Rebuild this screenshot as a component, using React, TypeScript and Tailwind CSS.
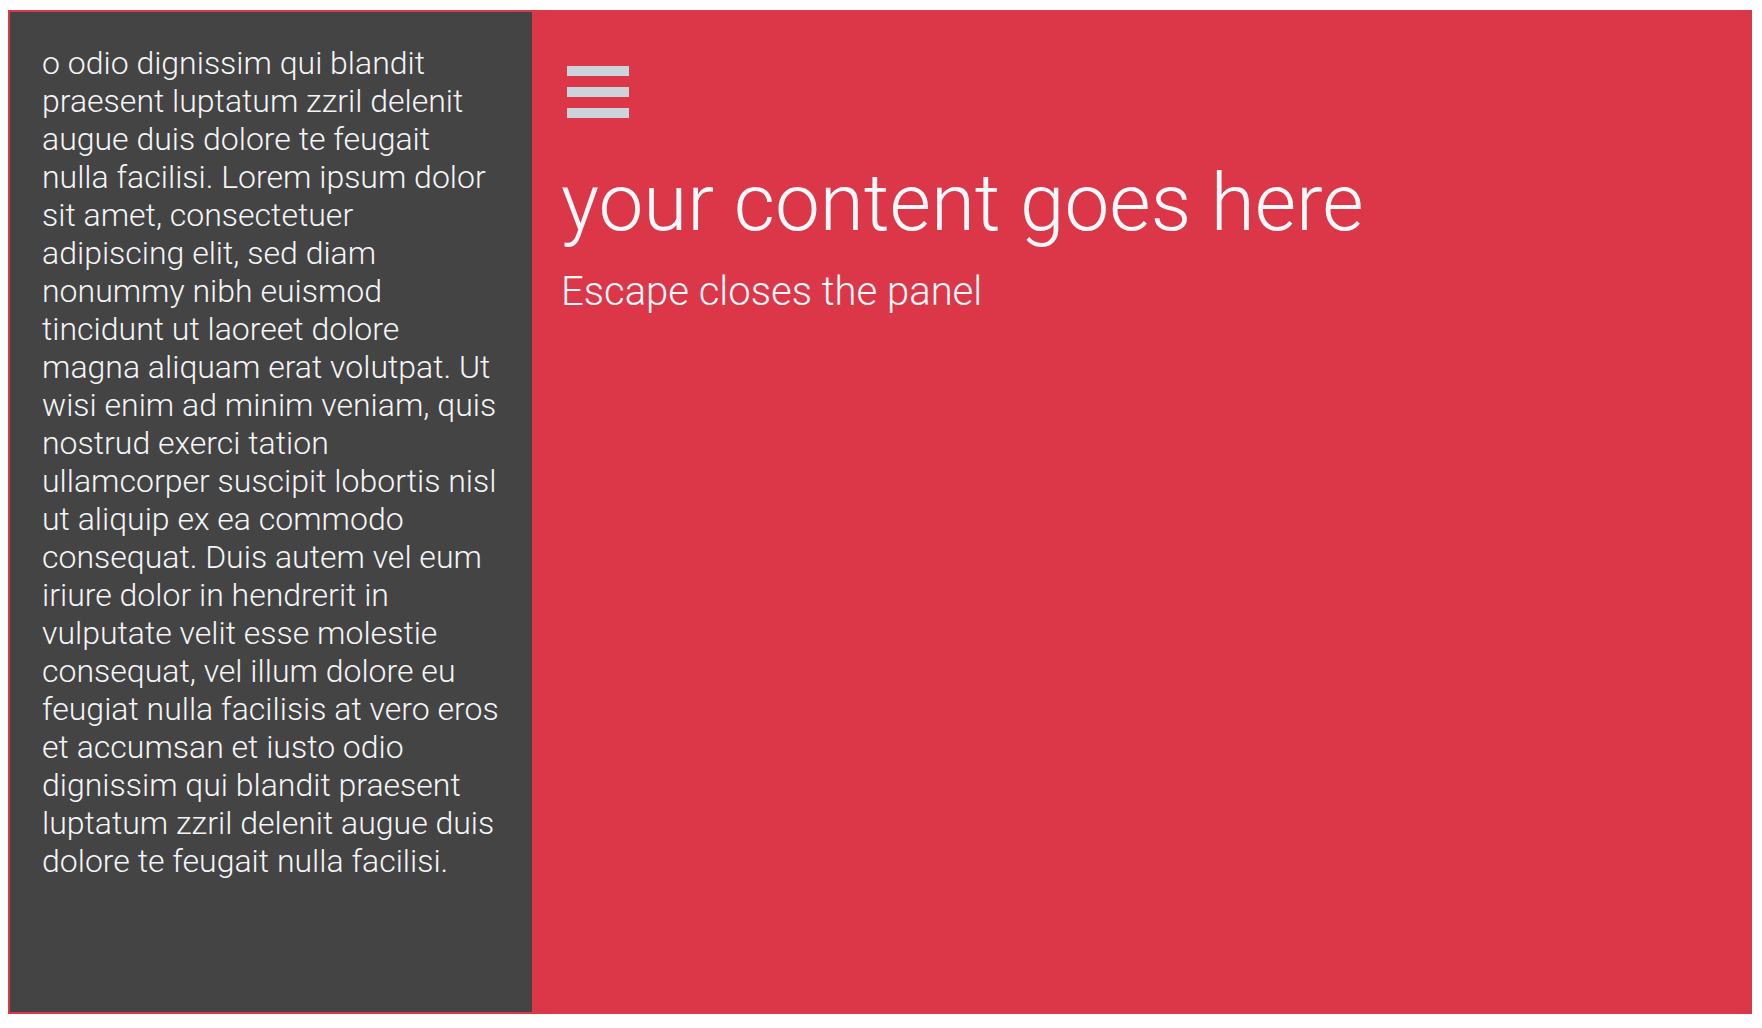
import React from "react";

const text =
  "o odio dignissim qui blandit praesent luptatum zzril delenit augue duis dolore te feugait nulla facilisi. Lorem ipsum dolor sit amet, consectetuer adipiscing elit, sed diam nonummy nibh euismod tincidunt ut laoreet dolore magna aliquam erat volutpat. Ut wisi enim ad minim veniam, quis nostrud exerci tation ullamcorper suscipit lobortis nisl ut aliquip ex ea commodo consequat. Duis autem vel eum iriure dolor in hendrerit in vulputate velit esse molestie consequat, vel illum dolore eu feugiat nulla facilisis at vero eros et accumsan et iusto odio dignissim qui blandit praesent luptatum zzril delenit augue duis dolore te feugait nulla facilisi.";

export default function App() {
  return (
    <div className="w-[1762px] h-[1028px] bg-white overflow-hidden pt-[10px] pl-[8px]" style={{ fontFamily: "Roboto, 'Noto Sans', sans-serif" }}>
      <div className="w-[1744px] h-[1004px] bg-[#db3749] p-[2px] flex">
        <aside className="w-[522px] h-full bg-[#444444] pt-[32px] pl-[32px] pr-[31px]">
          <p className="text-[32px] leading-[38px] font-light text-[#f4f5f7]">{text}</p>
        </aside>
        <main className="flex-1 flex flex-col pl-[29px] pt-[54px]">
          <button className="ml-[6px] w-[62px] flex flex-col gap-[11px]" aria-label="menu">
            <span className="block h-[10px] bg-[#cbd3db]" />
            <span className="block h-[10px] bg-[#cbd3db]" />
            <span className="block h-[10px] bg-[#cbd3db]" />
          </button>
          <h1 className="mt-[37px] text-[80px] leading-[96px] font-light text-[#f7f8fa]">your content goes here</h1>
          <p className="mt-[17px] text-[40px] leading-[48px] font-light text-[#f7f8fa]">Escape closes the panel</p>
        </main>
      </div>
    </div>
  );
}
